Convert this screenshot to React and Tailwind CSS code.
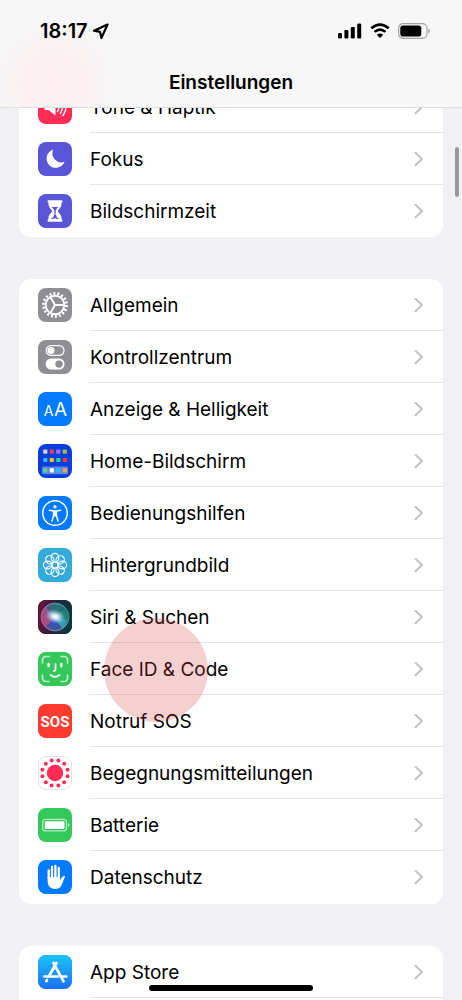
import React from 'react'

const dots = (n, r) =>
  Array.from({ length: n }, (_, i) => {
    const a = ((i + 0.5) * 2 * Math.PI) / n
    return [17 + r * Math.cos(a), 17 + r * Math.sin(a)]
  })

const SoundIcon = () => (
  <g>
    <path d="M6.500 14h4l7-5.500v17l-7-5.500h-4z" fill="#fff" />
    <path d="M20.500 12.500q2 4-1 9M23.600 10.500q2.800 6-1.300 13M26.800 8.500q3.600 8.500-1.800 17" fill="none" stroke="#fff" strokeWidth="1.400" strokeLinecap="round" />
  </g>
)

const MoonIcon = () => (
  <path d="M15.200 7.600A9.300 9.300 0 1 0 26.600 19.700A9 9 0 0 1 15.200 7.600Z" fill="#fff" />
)

const HourglassIcon = () => (
  <g>
    <path d="M10.500 6.200h13q1 0 1 1.200t-1 1.300c.5 4.600-2.800 6-3.800 8.300c1 2.400 4.300 3.700 3.800 8.300q1 .1 1 1.300t-1 1.200h-13q-1 0-1-1.200t1-1.300c-.5-4.600 2.800-5.900 3.800-8.300c-1-2.300-4.300-3.700-3.800-8.300q-1-.1-1-1.300t1-1.200z" fill="#fff" />
    <path d="M13.500 13h7q-2.900 2.200-2.900 4v3.500q.6 2.600 3.400 4.600h-8q2.800-2 3.400-4.600V17q0-1.800-2.900-4z" fill="#5856d6" />
    <path d="M14.800 24.800q2.200-1.800 4.400 0z" fill="#fff" />
  </g>
)

const GearIcon = () => (
  <g fill="none" stroke="#fff">
    <circle cx="17" cy="17" r="9.300" strokeWidth="1.900" />
    <circle cx="17" cy="17" r="11.500" strokeWidth="2.800" strokeDasharray="2 2.014" />
    <path d="M26.300 17H17L12.400 9M17 17l-4.600 8" strokeWidth="1.900" />
  </g>
)

const ControlIcon = () => (
  <g>
    <rect x="8.200" y="5.600" width="17.800" height="9.800" rx="4.900" fill="none" stroke="#fff" strokeWidth="1.200" />
    <circle cx="13" cy="10.500" r="3.500" fill="#fff" />
    <rect x="7.600" y="18.600" width="19" height="11" rx="5.500" fill="#fff" />
    <circle cx="21" cy="24.100" r="3.700" fill="#8e8e93" />
  </g>
)

const TextSizeIcon = () => (
  <g fill="#fff" fontFamily="Inter, sans-serif" fontWeight="400" textAnchor="middle">
    <text x="10.500" y="24" fontSize="14">A</text>
    <text x="22.500" y="24" fontSize="19">A</text>
  </g>
)

const HomeIcon = () => {
  const rows = [
    ['#d1d1d6', '#ff3b5c', '#af6dff', '#a8bd3a'],
    ['#32b9ff', '#ffc400', '#30d1a0', '#ff3b30'],
    ['#5fd38a', '#ffffff', '#20c0f5', '#ff9f4a'],
  ]
  return (
    <g>
      <rect x="4" y="22.500" width="26" height="7.800" rx="1.500" fill="#5d86e6" />
      {rows.map((row, y) =>
        row.map((fill, x) => (
          <rect key={fill} x={5.200 + x * 6.500} y={[5.500, 13.900, 24.300][y]} width="4.200" height="4.200" rx="1" fill={fill} />
        ))
      )}
    </g>
  )
}

const AccessIcon = () => (
  <g>
    <circle cx="17" cy="17" r="12.300" fill="none" stroke="#fff" strokeWidth="1.500" />
    <circle cx="17" cy="10.800" r="1.700" fill="#fff" />
    <path d="M11.500 14.300l4 .8h3l4-.8M17 15v5M15.600 15.500v4l-1.600 5.500M18.400 15.500v4l1.600 5.500" fill="none" stroke="#fff" strokeWidth="1.500" strokeLinecap="round" strokeLinejoin="round" />
  </g>
)

const FlowerIcon = () => (
  <g fill="none" stroke="#fff" strokeWidth="1.200">
    {[0, 45, 90, 135, 180, 225, 270, 315].map((a) => (
      <ellipse key={a} cx="17" cy="9.700" rx="3.900" ry="4.300" transform={`rotate(${a} 17 17)`} />
    ))}
    <circle cx="17" cy="17" r="3" />
  </g>
)

const SiriIcon = () => (
  <g>
    <defs>
      <linearGradient id="siriBg" x1="0" y1="0.300" x2="1" y2="0.500">
        <stop offset="0" stopColor="#6d1238" />
        <stop offset="0.500" stopColor="#242042" />
        <stop offset="1" stopColor="#063a40" />
      </linearGradient>
      <linearGradient id="siriOrb" x1="0" y1="0.600" x2="1" y2="0.300">
        <stop offset="0" stopColor="#c93a76" />
        <stop offset="0.400" stopColor="#76689c" />
        <stop offset="0.700" stopColor="#2f8f86" />
        <stop offset="1" stopColor="#126c64" />
      </linearGradient>
      <radialGradient id="siriGlow">
        <stop offset="0" stopColor="#fff" />
        <stop offset="0.300" stopColor="#e9f6ff" stopOpacity="0.900" />
        <stop offset="1" stopColor="#9cd5ff" stopOpacity="0" />
      </radialGradient>
    </defs>
    <rect width="34" height="34" fill="url(#siriBg)" />
    <circle cx="17" cy="17" r="14" fill="url(#siriOrb)" stroke="#7fa6a8" strokeOpacity="0.600" strokeWidth="1" />
    <path d="M8 8Q17 0 27 9Q22 13 17 16Q12 12 8 8Z" fill="#1f5f6c" opacity="0.600" />
    <path d="M17 18l-9 8q8 7 16 2z" fill="#1f4bb0" opacity="0.700" />
    <path d="M17 18l12 2q-1 5-5 8z" fill="#38a5d0" opacity="0.700" />
    <ellipse cx="17" cy="16.500" rx="10" ry="7" fill="url(#siriGlow)" transform="rotate(20 17 17)" />
  </g>
)

const FaceIcon = () => (
  <g fill="none" stroke="#fff" strokeLinecap="round">
    <path d="M4.500 11V8a3.500 3.500 0 0 1 3.500-3.500h3M23 4.500h3A3.500 3.500 0 0 1 29.500 8v3M29.500 23v3a3.500 3.500 0 0 1-3.500 3.500h-3M11 29.500H8A3.500 3.500 0 0 1 4.500 26v-3" strokeWidth="1.700" opacity="0.700" />
    <path d="M10.600 12v2.200M23.300 12v2.200" strokeWidth="2.400" />
    <path d="M17.500 12v5.500q0 1.500-1.700 1.500M12.500 23q4.500 3.600 9 0" strokeWidth="1.700" />
  </g>
)

const SosIcon = () => (
  <text x="17" y="22.500" textAnchor="middle" fontFamily="Roboto, sans-serif" fontSize="15" fontWeight="700" fill="#fff">SOS</text>
)

const ExposureIcon = () => (
  <g fill="#ff2d55">
    <rect x="0.500" y="0.500" width="33" height="33" rx="7.500" fill="#fff" stroke="#e2e2e5" />
    <circle cx="17" cy="17" r="8.200" />
    {dots(12, 13).map(([x, y]) => (
      <circle key={`${x}-${y}`} cx={x} cy={y} r="2" />
    ))}
  </g>
)

const BatteryIcon = () => (
  <g>
    <rect x="4.700" y="11.300" width="23.800" height="11.600" rx="3" fill="none" stroke="#b8ecc6" strokeWidth="1.200" />
    <rect x="6.700" y="13.300" width="19.800" height="7.600" rx="1.500" fill="#fff" />
    <path d="M30 15.300q1.500.3 1.500 1.800t-1.500 1.800z" fill="#b8ecc6" />
  </g>
)

const HandIcon = () => (
  <g fill="none" stroke="#fff" strokeWidth="2.300" strokeLinecap="round">
    <path d="M10.700 18V10.500M14 17V7M17.400 17V6M20.800 17V8" />
    <path d="M9.600 17h12.300v3.500q2.200-4.200 4-4.700q1.600-.2 1 1.300c-1.400 3-2 5.700-3.700 8.700q-2 3.200-6 3.200-7 0-7.600-7.500z" fill="#fff" stroke="none" />
  </g>
)

const StoreIcon = () => (
  <g>
    <defs>
      <linearGradient id="storeBg" x1="0" y1="0" x2="0" y2="1">
        <stop offset="0" stopColor="#1bc3fb" />
        <stop offset="1" stopColor="#1d70f2" />
      </linearGradient>
    </defs>
    <rect width="34" height="34" fill="url(#storeBg)" />
    <path d="M18.500 8L11 21M15.500 8L25.500 26.300M6.500 21.500h13.300M24.500 21.500h3.700M9 25l-.6 1.200" stroke="#fff" strokeWidth="2.700" strokeLinecap="round" />
  </g>
)

const groups = [
  {
    style: 'rounded-b-xl',
    rows: [
      { name: 'Töne & Haptik', bg: 'bg-[#ff2d55]', Icon: SoundIcon },
      { name: 'Fokus', bg: 'bg-[#5856d6]', Icon: MoonIcon },
      { name: 'Bildschirmzeit', bg: 'bg-[#5856d6]', Icon: HourglassIcon, last: true },
    ],
  },
  {
    style: 'rounded-xl pb-px',
    rows: [
      { name: 'Allgemein', bg: 'bg-[#8e8e93]', Icon: GearIcon },
      { name: 'Kontrollzentrum', bg: 'bg-[#8e8e93]', Icon: ControlIcon },
      { name: 'Anzeige & Helligkeit', bg: 'bg-[#007aff]', Icon: TextSizeIcon },
      { name: 'Home-Bildschirm', bg: 'bg-[#0a3fdc]', Icon: HomeIcon },
      { name: 'Bedienungshilfen', bg: 'bg-[#007aff]', Icon: AccessIcon },
      { name: 'Hintergrundbild', bg: 'bg-[#34aadc]', Icon: FlowerIcon },
      { name: 'Siri & Suchen', bg: 'bg-[#242042]', Icon: SiriIcon },
      { name: 'Face ID & Code', bg: 'bg-[#34c759]', Icon: FaceIcon, touched: true },
      { name: 'Notruf SOS', bg: 'bg-[#ff3b30]', Icon: SosIcon },
      { name: 'Begegnungsmitteilungen', bg: 'bg-white', Icon: ExposureIcon },
      { name: 'Batterie', bg: 'bg-[#34c759]', Icon: BatteryIcon },
      { name: 'Datenschutz', bg: 'bg-[#007aff]', Icon: HandIcon, last: true },
    ],
  },
  {
    style: 'rounded-t-xl pb-4',
    rows: [{ name: 'App Store', bg: 'bg-[#1d8cf7]', Icon: StoreIcon }],
  },
]

const Row = ({ name, bg, Icon, touched, last }) => (
  <li className="relative">
    <a href="#" className="flex h-[52px] items-center pl-[19px]">
      <svg viewBox="0 0 34 34" aria-hidden="true" className={`size-[34px] shrink-0 rounded-lg ${bg}`}>
        <Icon />
      </svg>
      <span className={`ml-[18px] flex h-full flex-1 items-center justify-between pt-[2px] pr-[19px] ${last ? '' : 'border-b border-[#e4e4e6]'}`}>
        {name}
        <svg viewBox="0 0 10 16" aria-hidden="true" className="h-4 w-[10px]">
          <path d="M1.500 0.800L8 7l-6.500 6.200" fill="none" stroke="#c4c4c7" strokeWidth="2.200" strokeLinecap="round" strokeLinejoin="round" />
        </svg>
      </span>
    </a>
    {/* touch marker */}
    {touched && <span className="pointer-events-none absolute -top-[25px] left-[85px] z-10 size-[104px] rounded-full bg-[#d64545]/25" />}
  </li>
)

export default function App() {
  return (
    <div className="relative flex h-screen flex-col overflow-hidden bg-[#f0f0f5] font-['Inter',sans-serif] text-[19px] leading-6 text-black">
      <header className="z-20 shrink-0 border-b border-[#dfdfe0] bg-[#f7f7f7] bg-[radial-gradient(circle_at_54px_84px,#fdeeef_0px,#fbf0f1_28px,#f7f7f7_64px)]">
        <div className="flex h-[62px] items-center justify-between pr-8 pl-10">
          <div className="flex items-center gap-1 text-[20px] font-semibold">
            <span>18:17</span>
            <svg viewBox="0 0 18 18" aria-hidden="true" className="size-[18px]">
              <path d="M15.500 2.500L2 8.700l6 1.200 1.500 6z" fill="none" stroke="#000" strokeWidth="2.200" strokeLinejoin="round" />
            </svg>
          </div>
          <div className="flex items-center gap-2">
            <svg viewBox="0 0 24 16" aria-hidden="true" className="h-4 w-6">
              <rect x="0" y="10" width="4" height="5.500" rx="1.200" />
              <rect x="6.400" y="7" width="4" height="8.500" rx="1.200" />
              <rect x="12.800" y="4" width="4" height="11.500" rx="1.200" />
              <rect x="19.200" y="0.500" width="4" height="15" rx="1.200" />
            </svg>
            <svg viewBox="0 0 20 16" aria-hidden="true" className="h-4 w-5">
              <path d="M1.300 5.300q8.700-7.400 17.400 0M4.500 8.900q5.500-4.600 11 0" fill="none" stroke="#000" strokeWidth="2.500" />
              <path d="M6.800 11.700q3.200-2.500 6.400 0L10 15z" />
            </svg>
            <svg viewBox="0 0 32 16" aria-hidden="true" className="h-4 w-8">
              <rect x="0.600" y="0.700" width="28.400" height="14.600" rx="4.500" fill="none" stroke="#a3a3a3" strokeWidth="1.200" />
              <rect x="2.300" y="2.500" width="21" height="11" rx="2.800" />
              <path d="M30.400 5.500q1.500.7 1.500 2.500t-1.500 2.500z" fill="#a3a3a3" />
            </svg>
          </div>
        </div>
        <h1 className="h-[45px] pt-[9px] text-center font-semibold">Einstellungen</h1>
      </header>

      <main className="min-h-0 flex-1 overflow-hidden px-[19px]">
        {/* list is scrolled partly under the header */}
        <div className="-mt-[27px] flex flex-col gap-[42px]">
          {groups.map(({ style, rows }) => (
            <ul key={rows[0].name} className={`bg-white ${style}`}>
              {rows.map((row) => (
                <Row key={row.name} {...row} />
              ))}
            </ul>
          ))}
        </div>
      </main>

      {/* scroll thumb and home indicator */}
      <div className="absolute top-[147px] right-[3px] h-[50px] w-1 rounded-full bg-[#98989b]" />
      <div className="absolute bottom-[9px] left-1/2 h-[6px] w-[164px] -translate-x-1/2 rounded-full bg-black" />
    </div>
  )
}
